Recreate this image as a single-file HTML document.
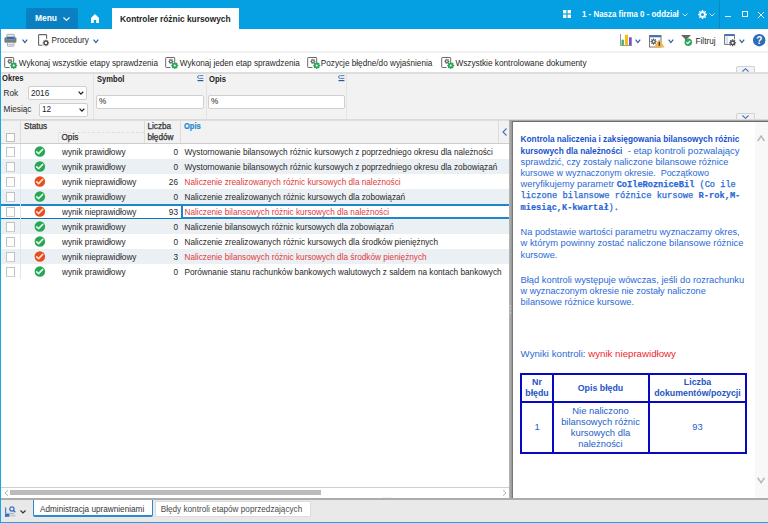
<!DOCTYPE html>
<html><head><meta charset="utf-8">
<style>
*{box-sizing:border-box;margin:0;padding:0}
html,body{width:768px;height:523px;overflow:hidden;background:#fff}
body{position:relative;font-family:"Liberation Sans",sans-serif;font-size:8.2px;color:#282828}
.a{position:absolute}
.t{position:absolute;white-space:nowrap;line-height:1}
svg{position:absolute;overflow:visible}
.row{position:absolute;left:1px;width:508px;height:15px;font-size:8.23px}
.row span{position:absolute;top:5px;line-height:1;white-space:nowrap}
.row .cb{position:absolute;left:5px;top:3px;width:9px;height:10px;border:1px solid #c2c2c2;border-bottom-color:#d0d0d0;background:#fff}
.row .ic{left:34px;top:2px}
.row .c1{left:61px}
.row .c2{left:143px;width:34px;text-align:right}
.row .c3{left:183.5px}
.row:before{content:"";position:absolute;left:19px;top:0;width:1px;height:15px;background:#dbe6f1}
.sel{border-top:2px solid #1c86c9;border-bottom:1px solid #0b72b8}
.sel:before{top:-2px}
.sel span{top:3px} .sel .cb{top:1px} .sel .ic{top:0px}
.bold{font-weight:bold;font-size:8.6px;transform:scaleX(0.885);transform-origin:0 0}
.sel3{position:absolute;left:180px;top:-2px;width:340px;height:15px;border:2px solid #1c86c9}
.inp{position:absolute;background:#fff;border:1px solid #cfcfcf;border-radius:2px}
.chev{stroke:#2b5d9e;stroke-width:1.2;fill:none}
.rl{position:absolute;left:520.6px;white-space:nowrap;font-size:9.2px;line-height:1;color:#2a6ad6}
.rb{font-size:8.25px;color:#1552cf}
.mo{font-family:'Liberation Mono',monospace;font-size:8.65px;-webkit-text-stroke:0.25px #2a6ad6}
.mo b{-webkit-text-stroke:0.15px #1a55cc}
.tc{position:absolute;text-align:center;white-space:nowrap;font-size:9.4px;line-height:1;color:#2262c9}
.b2{font-weight:bold;font-size:8.8px;color:#1d55c4}
</style></head><body>

<!-- TOP BAR -->
<div class="a" style="left:0;top:0;width:768px;height:29px;background:#04a0e1"></div>
<div class="a" style="left:26px;top:8px;width:52px;height:21px;background:#0a80c2;border-radius:2px 2px 0 0"></div>
<div class="t" style="left:34.5px;top:13.4px;font-size:9.8px;font-weight:bold;color:#fff;transform:scaleX(0.86);transform-origin:0 0">Menu</div>
<svg style="left:63px;top:17px" width="7" height="4"><path d="M0.5 0.5 L3.5 3.5 L6.5 0.5" stroke="#fff" stroke-width="1.1" fill="none"/></svg>
<svg style="left:91px;top:14px" width="8" height="9"><path d="M4 0 L8 4 L8 9 L5.2 9 L5.2 6 L2.8 6 L2.8 9 L0 9 L0 4 Z" fill="#fff"/></svg>
<div class="a" style="left:112px;top:8px;width:127px;height:21px;background:#fff"></div>
<div class="t" style="left:120px;top:13.8px;font-size:9.6px;font-weight:bold;color:#1e1e1e;transform:scaleX(0.872);transform-origin:0 0">Kontroler różnic kursowych</div>

<svg style="left:563px;top:10px" width="8" height="8"><rect x="0" y="0" width="3.4" height="3.4" fill="#fff"/><rect x="4.6" y="0" width="3.4" height="3.4" fill="#fff"/><rect x="0" y="4.6" width="3.4" height="3.4" fill="#fff"/><rect x="4.6" y="4.6" width="3.4" height="3.4" fill="#fff"/></svg>
<div class="t" style="left:582px;top:10px;font-size:8.8px;font-weight:bold;color:#fff;transform:scaleX(0.9);transform-origin:0 0">1 - Nasza firma 0 - oddział</div>
<svg style="left:682px;top:13px" width="6" height="4"><path d="M0.5 0.5 L3 3 L5.5 0.5" stroke="#cfeefc" stroke-width="0.9" fill="none"/></svg>
<svg style="left:697.5px;top:10px" width="9" height="9" viewBox="0 0 9 9"><path d="M8.94 3.80 L8.94 5.20 L7.71 5.27 L7.31 6.22 L8.14 7.15 L7.15 8.14 L6.22 7.31 L5.27 7.71 L5.20 8.94 L3.80 8.94 L3.73 7.71 L2.78 7.31 L1.85 8.14 L0.86 7.15 L1.69 6.22 L1.29 5.27 L0.06 5.20 L0.06 3.80 L1.29 3.73 L1.69 2.78 L0.86 1.85 L1.85 0.86 L2.78 1.69 L3.73 1.29 L3.80 0.06 L5.20 0.06 L5.27 1.29 L6.22 1.69 L7.15 0.86 L8.14 1.85 L7.31 2.78 L7.71 3.73Z" fill="#fff"/><circle cx="4.5" cy="4.5" r="1.5" fill="#04a0e1"/></svg>
<svg style="left:709px;top:13px" width="6" height="4"><path d="M0.5 0.5 L3 3 L5.5 0.5" stroke="#cfeefc" stroke-width="0.9" fill="none"/></svg>
<div class="a" style="left:719px;top:0;width:1px;height:29px;background:#0b88c4"></div>
<div class="a" style="left:725px;top:16px;width:6px;height:1px;background:#d8f2fd"></div>
<div class="a" style="left:742px;top:11px;width:6px;height:6px;border:1px solid #e8f7fe"></div>
<svg style="left:758px;top:11.5px" width="6" height="6"><path d="M0 0 L6 6 M6 0 L0 6" stroke="#e8f7fe" stroke-width="1"/></svg>

<!-- left/bottom window border -->
<div class="a" style="left:0;top:29px;width:1px;height:494px;background:#1aa6e4;z-index:5"></div>
<div class="a" style="left:0;top:522px;width:768px;height:1px;background:#1aa6e4;z-index:5"></div>

<!-- TOOLBAR ROW 1 -->
<svg style="left:4px;top:34px" width="13" height="13" viewBox="0 0 13 13">
<rect x="0.4" y="3.2" width="12" height="5.5" rx="1.2" fill="#7d7d7d"/>
<rect x="2.8" y="0.3" width="7.6" height="5" rx="0.8" fill="#e6e6e6" stroke="#9a9a9a" stroke-width="0.8"/>
<rect x="2.8" y="2.7" width="7.6" height="2.5" fill="#2f6cc0"/>
<rect x="3.5" y="8.7" width="6.5" height="3.5" rx="0.6" fill="#fff" stroke="#9a9a9a" stroke-width="0.9"/>
<rect x="4.5" y="10.2" width="4.5" height="0.9" fill="#8fb0e0"/>
</svg>
<svg style="left:22px;top:39px" width="6" height="5"><path class="chev" d="M0.6 0.6 L2.9 3.6 L5.2 0.6"/></svg>
<svg style="left:38px;top:34px" width="12" height="13" viewBox="0 0 12 13"><path d="M4.5 11.2 H1.3 Q0.6 11.2 0.6 10.5 V1.3 Q0.6 0.6 1.3 0.6 H7.9 Q8.6 0.6 8.6 1.3 V4.8" stroke="#666" stroke-width="1.1" fill="none"/><path d="M11.16 8.38 L11.16 9.42 L10.23 9.46 L9.95 10.15 L10.57 10.84 L9.84 11.57 L9.15 10.95 L8.46 11.23 L8.42 12.16 L7.38 12.16 L7.34 11.23 L6.65 10.95 L5.96 11.57 L5.23 10.84 L5.85 10.15 L5.57 9.46 L4.64 9.42 L4.64 8.38 L5.57 8.34 L5.85 7.65 L5.23 6.96 L5.96 6.23 L6.65 6.85 L7.34 6.57 L7.38 5.64 L8.42 5.64 L8.46 6.57 L9.15 6.85 L9.84 6.23 L10.57 6.96 L9.95 7.65 L10.23 8.34Z" fill="#4a4a4a"/><circle cx="7.9" cy="8.9" r="1.2" fill="#fff"/></svg>
<div class="t" style="left:51.5px;top:37.2px;font-size:8.2px;color:#282828">Procedury</div>
<svg style="left:93px;top:39px" width="6" height="5"><path class="chev" d="M0.6 0.6 L2.9 3.6 L5.2 0.6"/></svg>

<div class="a" style="left:1px;top:51px;width:767px;height:2px;background:#f1f1f1"></div>

<!-- right toolbar -->
<svg style="left:620px;top:34px" width="12" height="12" viewBox="0 0 12 12"><path d="M0.5 0 V11.5 H12" stroke="#999" stroke-width="1" fill="none"/><rect x="1.5" y="5.7" width="2.4" height="5.6" fill="#3fb36b"/><rect x="5" y="0.7" width="3" height="10.6" fill="#f7bd10"/><rect x="9" y="3.3" width="2.7" height="8" fill="#7a4cc2"/></svg>
<svg style="left:635px;top:39px" width="6" height="5"><path class="chev" d="M0.6 0.6 L2.9 3.6 L5.2 0.6"/></svg>
<svg style="left:649px;top:34.5px" width="16" height="13" viewBox="0 0 16 13"><rect x="0.5" y="0.5" width="11.5" height="11.5" fill="#fff" stroke="#777" stroke-width="1"/><rect x="0.5" y="0.5" width="11.5" height="1.8" fill="#3a74c4"/><path d="M7.66 6.12 L7.66 7.08 L6.74 7.11 L6.48 7.75 L7.11 8.42 L6.42 9.11 L5.75 8.48 L5.11 8.74 L5.08 9.66 L4.12 9.66 L4.09 8.74 L3.45 8.48 L2.78 9.11 L2.09 8.42 L2.72 7.75 L2.46 7.11 L1.54 7.08 L1.54 6.12 L2.46 6.09 L2.72 5.45 L2.09 4.78 L2.78 4.09 L3.45 4.72 L4.09 4.46 L4.12 3.54 L5.08 3.54 L5.11 4.46 L5.75 4.72 L6.42 4.09 L7.11 4.78 L6.48 5.45 L6.74 6.09Z" fill="#555"/><circle cx="4.6" cy="6.6" r="1" fill="#fff"/><path d="M10.2 4.2 L15.6 12.5 H4.8 Z" fill="#f1b34f"/><rect x="9.7" y="6.8" width="1.1" height="4" fill="#222"/></svg>
<svg style="left:668px;top:39px" width="6" height="5"><path class="chev" d="M0.6 0.6 L2.9 3.6 L5.2 0.6"/></svg>
<svg style="left:681px;top:35px" width="12" height="11" viewBox="0 0 12 11"><path d="M0 0 H10 L6 4 V6 L4 6 V4 Z" fill="#666"/><circle cx="7.3" cy="7.2" r="3.7" fill="#2aa65a"/><path d="M5.4 7.2 L6.8 8.5 L9.2 6" stroke="#fff" stroke-width="1.2" fill="none"/></svg>
<div class="t" style="left:695.5px;top:38px;font-size:8.2px;color:#282828">Filtruj</div>
<svg style="left:724px;top:34px" width="13" height="13" viewBox="0 0 13 13"><path d="M6 10.5 H0.5 V0.5 H10.5 V5.5" fill="#fff" stroke="#7a7a7a" stroke-width="1"/><rect x="0.5" y="0.5" width="10" height="1.6" fill="#3a74c4"/><rect x="1.5" y="2.6" width="2.6" height="7.4" fill="#cfe3f6"/><rect x="4.1" y="2.6" width="5.9" height="7.4" fill="#fff"/><path d="M12.16 8.24 L12.16 9.36 L11.13 9.41 L10.82 10.16 L11.51 10.92 L10.72 11.71 L9.96 11.02 L9.21 11.33 L9.16 12.36 L8.04 12.36 L7.99 11.33 L7.24 11.02 L6.48 11.71 L5.69 10.92 L6.38 10.16 L6.07 9.41 L5.04 9.36 L5.04 8.24 L6.07 8.19 L6.38 7.44 L5.69 6.68 L6.48 5.89 L7.24 6.58 L7.99 6.27 L8.04 5.24 L9.16 5.24 L9.21 6.27 L9.96 6.58 L10.72 5.89 L11.51 6.68 L10.82 7.44 L11.13 8.19Z" fill="#505050"/><circle cx="8.6" cy="8.8" r="1.1" fill="#fff"/></svg>
<svg style="left:739px;top:39px" width="6" height="5"><path class="chev" d="M0.6 0.6 L2.9 3.6 L5.2 0.6"/></svg>
<svg style="left:753px;top:34px" width="13" height="13" viewBox="0 0 13 13"><circle cx="6.2" cy="6.2" r="6.2" fill="#2d6db5"/><text x="6.2" y="10" text-anchor="middle" font-family="Liberation Sans" font-weight="bold" font-size="10" fill="#fff">?</text></svg>

<!-- TOOLBAR ROW 2 -->
<svg style="left:4px;top:56.6px" width="14" height="13" viewBox="0 0 14 13">
<path d="M5.5 10.5 H1.3 Q0.7 10.5 0.7 9.9 V1.1 Q0.7 0.5 1.3 0.5 H9.1 Q9.7 0.5 9.7 1.1 V5" stroke="#6a6a6a" stroke-width="1" fill="#fff"/>
<path d="M8.57 3.98 L8.57 4.82 L7.75 4.84 L7.52 5.39 L8.08 5.99 L7.49 6.58 L6.89 6.02 L6.34 6.25 L6.32 7.07 L5.48 7.07 L5.46 6.25 L4.91 6.02 L4.31 6.58 L3.72 5.99 L4.28 5.39 L4.05 4.84 L3.23 4.82 L3.23 3.98 L4.05 3.96 L4.28 3.41 L3.72 2.81 L4.31 2.22 L4.91 2.78 L5.46 2.55 L5.48 1.73 L6.32 1.73 L6.34 2.55 L6.89 2.78 L7.49 2.22 L8.08 2.81 L7.52 3.41 L7.75 3.96Z" fill="#666"/><circle cx="5.9" cy="4.4" r="0.8" fill="#fff"/>
<path d="M13.26 7.94 L13.26 9.06 L12.52 9.18 L12.17 10.02 L12.61 10.62 L11.82 11.41 L11.22 10.97 L10.38 11.32 L10.26 12.06 L9.14 12.06 L9.02 11.32 L8.18 10.97 L7.58 11.41 L6.79 10.62 L7.23 10.02 L6.88 9.18 L6.14 9.06 L6.14 7.94 L6.88 7.82 L7.23 6.98 L6.79 6.38 L7.58 5.59 L8.18 6.03 L9.02 5.68 L9.14 4.94 L10.26 4.94 L10.38 5.68 L11.22 6.03 L11.82 5.59 L12.61 6.38 L12.17 6.98 L12.52 7.82Z" fill="#2aa65a"/><circle cx="9.7" cy="8.5" r="1.0" fill="#fff"/>
</svg>
<div class="t" style="left:18.8px;top:60px;font-size:8.2px;color:#282828">Wykonaj wszystkie etapy sprawdzenia</div>
<svg style="left:164.8px;top:56.6px" width="14" height="13" viewBox="0 0 14 13">
<path d="M5.5 10.5 H1.3 Q0.7 10.5 0.7 9.9 V1.1 Q0.7 0.5 1.3 0.5 H9.1 Q9.7 0.5 9.7 1.1 V5" stroke="#6a6a6a" stroke-width="1" fill="#fff"/>
<path d="M8.57 3.98 L8.57 4.82 L7.75 4.84 L7.52 5.39 L8.08 5.99 L7.49 6.58 L6.89 6.02 L6.34 6.25 L6.32 7.07 L5.48 7.07 L5.46 6.25 L4.91 6.02 L4.31 6.58 L3.72 5.99 L4.28 5.39 L4.05 4.84 L3.23 4.82 L3.23 3.98 L4.05 3.96 L4.28 3.41 L3.72 2.81 L4.31 2.22 L4.91 2.78 L5.46 2.55 L5.48 1.73 L6.32 1.73 L6.34 2.55 L6.89 2.78 L7.49 2.22 L8.08 2.81 L7.52 3.41 L7.75 3.96Z" fill="#666"/><circle cx="5.9" cy="4.4" r="0.8" fill="#fff"/>
<path d="M13.26 7.94 L13.26 9.06 L12.52 9.18 L12.17 10.02 L12.61 10.62 L11.82 11.41 L11.22 10.97 L10.38 11.32 L10.26 12.06 L9.14 12.06 L9.02 11.32 L8.18 10.97 L7.58 11.41 L6.79 10.62 L7.23 10.02 L6.88 9.18 L6.14 9.06 L6.14 7.94 L6.88 7.82 L7.23 6.98 L6.79 6.38 L7.58 5.59 L8.18 6.03 L9.02 5.68 L9.14 4.94 L10.26 4.94 L10.38 5.68 L11.22 6.03 L11.82 5.59 L12.61 6.38 L12.17 6.98 L12.52 7.82Z" fill="#2aa65a"/><circle cx="9.7" cy="8.5" r="1.0" fill="#fff"/>
</svg>
<div class="t" style="left:179.8px;top:60px;font-size:8.2px;color:#282828">Wykonaj jeden etap sprawdzenia</div>
<svg style="left:306.7px;top:56.6px" width="14" height="13" viewBox="0 0 14 13">
<path d="M5.5 10.5 H1.3 Q0.7 10.5 0.7 9.9 V1.1 Q0.7 0.5 1.3 0.5 H9.1 Q9.7 0.5 9.7 1.1 V5" stroke="#6a6a6a" stroke-width="1" fill="#fff"/>
<path d="M8.57 3.98 L8.57 4.82 L7.75 4.84 L7.52 5.39 L8.08 5.99 L7.49 6.58 L6.89 6.02 L6.34 6.25 L6.32 7.07 L5.48 7.07 L5.46 6.25 L4.91 6.02 L4.31 6.58 L3.72 5.99 L4.28 5.39 L4.05 4.84 L3.23 4.82 L3.23 3.98 L4.05 3.96 L4.28 3.41 L3.72 2.81 L4.31 2.22 L4.91 2.78 L5.46 2.55 L5.48 1.73 L6.32 1.73 L6.34 2.55 L6.89 2.78 L7.49 2.22 L8.08 2.81 L7.52 3.41 L7.75 3.96Z" fill="#666"/><circle cx="5.9" cy="4.4" r="0.8" fill="#fff"/>
<path d="M13.26 7.94 L13.26 9.06 L12.52 9.18 L12.17 10.02 L12.61 10.62 L11.82 11.41 L11.22 10.97 L10.38 11.32 L10.26 12.06 L9.14 12.06 L9.02 11.32 L8.18 10.97 L7.58 11.41 L6.79 10.62 L7.23 10.02 L6.88 9.18 L6.14 9.06 L6.14 7.94 L6.88 7.82 L7.23 6.98 L6.79 6.38 L7.58 5.59 L8.18 6.03 L9.02 5.68 L9.14 4.94 L10.26 4.94 L10.38 5.68 L11.22 6.03 L11.82 5.59 L12.61 6.38 L12.17 6.98 L12.52 7.82Z" fill="#2aa65a"/><circle cx="9.7" cy="8.5" r="1.0" fill="#fff"/>
</svg>
<div class="t" style="left:320.8px;top:60px;font-size:8.2px;color:#282828">Pozycje błędne/do wyjaśnienia</div>

<svg style="left:440.6px;top:56.6px" width="14" height="13" viewBox="0 0 14 13">
<path d="M5.5 10.5 H1.3 Q0.7 10.5 0.7 9.9 V1.1 Q0.7 0.5 1.3 0.5 H9.1 Q9.7 0.5 9.7 1.1 V5" stroke="#6a6a6a" stroke-width="1" fill="#fff"/>
<path d="M8.57 3.98 L8.57 4.82 L7.75 4.84 L7.52 5.39 L8.08 5.99 L7.49 6.58 L6.89 6.02 L6.34 6.25 L6.32 7.07 L5.48 7.07 L5.46 6.25 L4.91 6.02 L4.31 6.58 L3.72 5.99 L4.28 5.39 L4.05 4.84 L3.23 4.82 L3.23 3.98 L4.05 3.96 L4.28 3.41 L3.72 2.81 L4.31 2.22 L4.91 2.78 L5.46 2.55 L5.48 1.73 L6.32 1.73 L6.34 2.55 L6.89 2.78 L7.49 2.22 L8.08 2.81 L7.52 3.41 L7.75 3.96Z" fill="#666"/><circle cx="5.9" cy="4.4" r="0.8" fill="#fff"/>
<path d="M13.26 7.94 L13.26 9.06 L12.52 9.18 L12.17 10.02 L12.61 10.62 L11.82 11.41 L11.22 10.97 L10.38 11.32 L10.26 12.06 L9.14 12.06 L9.02 11.32 L8.18 10.97 L7.58 11.41 L6.79 10.62 L7.23 10.02 L6.88 9.18 L6.14 9.06 L6.14 7.94 L6.88 7.82 L7.23 6.98 L6.79 6.38 L7.58 5.59 L8.18 6.03 L9.02 5.68 L9.14 4.94 L10.26 4.94 L10.38 5.68 L11.22 6.03 L11.82 5.59 L12.61 6.38 L12.17 6.98 L12.52 7.82Z" fill="#2aa65a"/><circle cx="9.7" cy="8.5" r="1.0" fill="#fff"/>
</svg>
<div class="t" style="left:455.4px;top:60px;font-size:8.25px;color:#282828">Wszystkie kontrolowane dokumenty</div>

<!-- FILTER PANEL -->
<div class="a" style="left:1px;top:72px;width:767px;height:48px;background:#f2f2f2;border-top:2px solid #dedede;border-bottom:1px solid #dadada"></div>
<div class="a" style="left:736px;top:66px;width:19px;height:6px;background:#f3f3f3;border:1px solid #d2d2d2;border-bottom:none;border-radius:2px 2px 0 0"></div>
<svg style="left:741.5px;top:67.5px" width="7" height="4"><path d="M0.5 3.5 L3.5 0.7 L6.5 3.5" stroke="#3e74b8" stroke-width="1.1" fill="none"/></svg>
<div class="a" style="left:736px;top:113px;width:19px;height:6px;background:#f3f3f3;border:1px solid #d2d2d2;border-bottom:none;border-radius:2px 2px 0 0"></div>
<svg style="left:741.5px;top:115px" width="7" height="4"><path d="M0.5 0.5 L3.5 3.3 L6.5 0.5" stroke="#3e74b8" stroke-width="1.1" fill="none"/></svg>

<div class="t bold" style="left:1.6px;top:73.6px;color:#222">Okres</div>
<div class="t" style="left:3.6px;top:89.5px">Rok</div>
<div class="inp" style="left:28px;top:86px;width:59px;height:14px"></div>
<div class="t" style="left:31px;top:89.5px;color:#222">2016</div>
<svg style="left:78px;top:91px" width="6" height="4"><path d="M0.6 0.7 L2.9 3.2 L5.3 0.7" stroke="#222" stroke-width="1.25" fill="none"/></svg>
<div class="t" style="left:3.6px;top:105.5px">Miesiąc</div>
<div class="inp" style="left:39px;top:103px;width:48.5px;height:13.5px"></div>
<div class="t" style="left:42px;top:106px;color:#222">12</div>
<svg style="left:79px;top:107.5px" width="6" height="4"><path d="M0.6 0.7 L2.9 3.2 L5.3 0.7" stroke="#222" stroke-width="1.25" fill="none"/></svg>
<div class="a" style="left:93px;top:74px;width:1px;height:45px;background:#e3e3e3"></div>

<div class="t bold" style="left:96.5px;top:75.3px;color:#222">Symbol</div>
<svg style="left:197px;top:75px" width="7" height="7"><path d="M6.4 0.6 H2.4 Q0.5 0.6 0.5 2.05 Q0.5 3.4 2.4 3.4 H6.4" stroke="#4f84c4" stroke-width="1" fill="none"/><path d="M0.5 5.6 H6.4" stroke="#2b5c98" stroke-width="1.2"/></svg>
<div class="a" style="left:206px;top:74px;width:1px;height:45px;background:#e3e3e3"></div>
<div class="inp" style="left:96px;top:94.5px;width:108px;height:14px"></div>
<div class="t" style="left:99px;top:98px;color:#222">%</div>

<div class="t bold" style="left:208.7px;top:75.3px;color:#222">Opis</div>
<svg style="left:337.5px;top:75px" width="7" height="7"><path d="M6.4 0.6 H2.4 Q0.5 0.6 0.5 2.05 Q0.5 3.4 2.4 3.4 H6.4" stroke="#4f84c4" stroke-width="1" fill="none"/><path d="M0.5 5.6 H6.4" stroke="#2b5c98" stroke-width="1.2"/></svg>
<div class="a" style="left:346px;top:74px;width:1px;height:45px;background:#e6e6e6"></div>
<div class="inp" style="left:208px;top:94.5px;width:137px;height:14px"></div>
<div class="t" style="left:211px;top:98px;color:#222">%</div>

<!-- GRID -->
<div class="a" style="left:1px;top:120px;width:508px;height:24px;background:#f2f2f2;border-top:1px solid #dedede;border-bottom:1px solid #cdcdcd"></div>
<div class="a" style="left:20px;top:120px;width:1px;height:23px;background:#dcdcdc"></div>
<div class="a" style="left:144px;top:120px;width:1px;height:23px;background:#dcdcdc"></div>
<div class="a" style="left:180px;top:120px;width:1px;height:23px;background:#dcdcdc"></div>
<div class="a" style="left:498px;top:120px;width:1px;height:23px;background:#dcdcdc"></div>
<div class="a" style="left:58px;top:132px;width:86px;height:0;border-top:1px dashed #dedede"></div>
<div class="a" style="left:58px;top:132px;width:1px;height:11px;background:#e6e6e6"></div>
<div class="t" style="left:24px;top:122.8px;color:#333;-webkit-text-stroke:0.25px #333">Status</div>
<div class="t" style="left:61.5px;top:134.3px;color:#333;-webkit-text-stroke:0.25px #333">Opis</div>
<div class="t" style="left:147.5px;top:122.8px;color:#333;-webkit-text-stroke:0.25px #333">Liczba</div>
<div class="t" style="left:147.5px;top:134.3px;color:#333;-webkit-text-stroke:0.25px #333">błędów</div>
<div class="t bold" style="left:184.3px;top:121.6px;color:#1f86d0;transform:scaleX(0.87);-webkit-text-stroke:0.2px #1f86d0">Opis</div>
<i class="a" style="left:6px;top:133px;width:9px;height:9px;border:1px solid #bdbdbd;background:#fff"></i>
<svg style="left:501.5px;top:128px" width="5" height="8"><path d="M4.5 0.5 L1 4 L4.5 7.5" stroke="#3e74b8" stroke-width="1.1" fill="none"/></svg>

<div class="row" style="top:144px;background:#fff"><i class="cb"></i><svg class="ic" width="11" height="11" viewBox="0 0 11 11"><circle cx="4.85" cy="5.55" r="5.25" fill="#25a854"/><path d="M1.7 5.8 L3.6 7.6 L7.7 3.4" stroke="#e6f5ea" stroke-width="1.6" fill="none" stroke-linecap="round" stroke-linejoin="round"/></svg><span class="c1">wynik prawidłowy</span><span class="c2">0</span><span class="c3" style="color:#282828">Wystornowanie bilansowych różnic kursowych z poprzedniego okresu dla należności</span></div>
<div class="row" style="top:159px;background:#ebf0f4"><i class="cb"></i><svg class="ic" width="11" height="11" viewBox="0 0 11 11"><circle cx="4.85" cy="5.55" r="5.25" fill="#25a854"/><path d="M1.7 5.8 L3.6 7.6 L7.7 3.4" stroke="#e6f5ea" stroke-width="1.6" fill="none" stroke-linecap="round" stroke-linejoin="round"/></svg><span class="c1">wynik prawidłowy</span><span class="c2">0</span><span class="c3" style="color:#282828">Wystornowanie bilansowych różnic kursowych z poprzedniego okresu dla zobowiązań</span></div>
<div class="row" style="top:174px;background:#fff"><i class="cb"></i><svg class="ic" width="11" height="11" viewBox="0 0 11 11"><circle cx="4.85" cy="5.55" r="5.25" fill="#e84c18"/><path d="M1.7 5.8 L3.6 7.6 L7.7 3.4" stroke="#fde3d6" stroke-width="1.6" fill="none" stroke-linecap="round" stroke-linejoin="round"/></svg><span class="c1">wynik nieprawidłowy</span><span class="c2">26</span><span class="c3" style="color:#e23a3c">Naliczenie zrealizowanych różnic kursowych dla należności</span></div>
<div class="row" style="top:189px;background:#ebf0f4"><i class="cb"></i><svg class="ic" width="11" height="11" viewBox="0 0 11 11"><circle cx="4.85" cy="5.55" r="5.25" fill="#25a854"/><path d="M1.7 5.8 L3.6 7.6 L7.7 3.4" stroke="#e6f5ea" stroke-width="1.6" fill="none" stroke-linecap="round" stroke-linejoin="round"/></svg><span class="c1">wynik prawidłowy</span><span class="c2">0</span><span class="c3" style="color:#282828">Naliczenie zrealizowanych różnic kursowych dla zobowiązań</span></div>
<div class="row sel" style="top:204px;background:#fff"><i class="cb"></i><svg class="ic" width="11" height="11" viewBox="0 0 11 11"><circle cx="4.85" cy="5.55" r="5.25" fill="#e84c18"/><path d="M1.7 5.8 L3.6 7.6 L7.7 3.4" stroke="#fde3d6" stroke-width="1.6" fill="none" stroke-linecap="round" stroke-linejoin="round"/></svg><span class="c1">wynik nieprawidłowy</span><span class="c2">93</span><span class="c3" style="color:#e23a3c">Naliczenie bilansowych różnic kursowych dla należności</span></div>
<div class="row" style="top:219px;background:#ebf0f4"><i class="cb"></i><svg class="ic" width="11" height="11" viewBox="0 0 11 11"><circle cx="4.85" cy="5.55" r="5.25" fill="#25a854"/><path d="M1.7 5.8 L3.6 7.6 L7.7 3.4" stroke="#e6f5ea" stroke-width="1.6" fill="none" stroke-linecap="round" stroke-linejoin="round"/></svg><span class="c1">wynik prawidłowy</span><span class="c2">0</span><span class="c3" style="color:#282828">Naliczenie bilansowych różnic kursowych dla zobowiązań</span></div>
<div class="row" style="top:234px;background:#fff"><i class="cb"></i><svg class="ic" width="11" height="11" viewBox="0 0 11 11"><circle cx="4.85" cy="5.55" r="5.25" fill="#25a854"/><path d="M1.7 5.8 L3.6 7.6 L7.7 3.4" stroke="#e6f5ea" stroke-width="1.6" fill="none" stroke-linecap="round" stroke-linejoin="round"/></svg><span class="c1">wynik prawidłowy</span><span class="c2">0</span><span class="c3" style="color:#282828">Naliczenie zrealizowanych różnic kursowych dla środków pieniężnych</span></div>
<div class="row" style="top:249px;background:#ebf0f4"><i class="cb"></i><svg class="ic" width="11" height="11" viewBox="0 0 11 11"><circle cx="4.85" cy="5.55" r="5.25" fill="#e84c18"/><path d="M1.7 5.8 L3.6 7.6 L7.7 3.4" stroke="#fde3d6" stroke-width="1.6" fill="none" stroke-linecap="round" stroke-linejoin="round"/></svg><span class="c1">wynik nieprawidłowy</span><span class="c2">3</span><span class="c3" style="color:#e23a3c">Naliczenie bilansowych różnic kursowych dla środków pieniężnych</span></div>
<div class="row" style="top:264px;background:#fff"><i class="cb"></i><svg class="ic" width="11" height="11" viewBox="0 0 11 11"><circle cx="4.85" cy="5.55" r="5.25" fill="#25a854"/><path d="M1.7 5.8 L3.6 7.6 L7.7 3.4" stroke="#e6f5ea" stroke-width="1.6" fill="none" stroke-linecap="round" stroke-linejoin="round"/></svg><span class="c1">wynik prawidłowy</span><span class="c2">0</span><span class="c3" style="color:#282828">Porównanie stanu rachunków bankowych walutowych z saldem na kontach bankowych</span></div>
<div class="a" style="left:181px;top:204px;width:330px;height:15px;border:2px solid #1c86c9"></div>

<div class="a" style="left:1px;top:487px;width:508px;height:1px;background:#cecece"></div>
<svg style="left:3.5px;top:490px" width="5" height="6"><path d="M4 0.3 L1 3 L4 5.7" stroke="#aaa" stroke-width="0.9" fill="none"/></svg>
<div class="a" style="left:10px;top:490px;width:311px;height:5px;background:#bbbbbb"></div>
<svg style="left:502px;top:490px" width="5" height="6"><path d="M1 0.3 L4 3 L1 5.7" stroke="#aaa" stroke-width="0.9" fill="none"/></svg>

<!-- splitter + right panel -->
<div class="a" style="left:509px;top:120px;width:3px;height:379px;background:linear-gradient(to right,#b9b9b9,#a6a6a6,#969696)"></div>
<div class="a" style="left:509.5px;top:304.5px;width:1.5px;height:2px;background:#c6c6c6"></div><div class="a" style="left:509.5px;top:308px;width:1.5px;height:2px;background:#c6c6c6"></div><div class="a" style="left:509.5px;top:311.5px;width:1.5px;height:2px;background:#c6c6c6"></div>
<div class="a" style="left:509px;top:120px;width:259px;height:1px;background:#a9a9a9"></div>
<div class="a" style="left:512px;top:121px;width:256px;height:1px;background:#6d6d6d"></div>
<div class="a" style="left:512px;top:121px;width:1px;height:378px;background:#767676"></div>
<div class="a" style="left:755px;top:122px;width:13px;height:376px;background:#f8f8f8"></div>
<svg style="left:756.8px;top:134.5px" width="9" height="7"><path d="M0.7 6 L4.1 1 L7.5 6" stroke="#b8b8b8" stroke-width="1.5" fill="none"/></svg>
<svg style="left:756.8px;top:476.6px" width="9" height="7"><path d="M0.7 0.8 L4.1 5.6 L7.5 0.8" stroke="#b8b8b8" stroke-width="1.5" fill="none"/></svg>


<div class="rl" style="top:135.4px"><b class="rb">Kontrola naliczenia i zaksięgowania bilansowych różnic</b></div>
<div class="rl" style="top:147.4px"><b class="rb">kursowych dla należności</b><span style="font-size:9.5px;line-height:0"> &nbsp;- etap kontroli pozwalający</span></div>
<div class="rl" style="top:157.8px">sprawdzić, czy zostały naliczone bilansowe różnice</div>
<div class="rl" style="top:169.0px;font-size:8.97px">kursowe w wyznaczonym okresie.&nbsp; Początkowo</div>
<div class="rl" style="top:180.1px"><span style="font-size:9.3px;line-height:0">weryfikujemy parametr </span><b class="mo">CoIleRozniceBil</b><span class="mo"> (Co ile</span></div>
<div class="rl" style="top:191.3px"><span class="mo" style="font-size:8.72px">liczone bilansowe różnice kursowe <b>R-rok,M-</b></span></div>
<div class="rl" style="top:202.5px"><span class="mo"><b>miesiąc,K-kwartał</b>).</span></div>
<div class="rl" style="top:228.1px">Na podstawie wartości parametru wyznaczamy okres,</div>
<div class="rl" style="top:239.3px;font-size:9.35px">w którym powinny zostać naliczone bilansowe różnice</div>
<div class="rl" style="top:250.5px">kursowe.</div>
<div class="rl" style="top:275.9px;font-size:9.32px">Błąd kontroli występuje wówczas, jeśli do rozrachunku</div>
<div class="rl" style="top:287.1px;font-size:9.13px">w wyznaczonym okresie nie zostały naliczone</div>
<div class="rl" style="top:298.1px;font-size:9.29px">bilansowe różnice kursowe.</div>
<div class="rl" style="top:349.0px;font-size:9.69px">Wyniki kontroli: <span style="color:#f0262a">wynik nieprawidłowy</span></div>
<div class="a" style="left:520px;top:373px;width:227px;height:81px;border:2px solid #0808c0"></div>
<div class="a" style="left:520px;top:400.5px;width:227px;height:2px;background:#0808c0"></div>
<div class="a" style="left:551.5px;top:373px;width:2px;height:81px;background:#0808c0"></div>
<div class="a" style="left:647.5px;top:373px;width:2px;height:81px;background:#0808c0"></div>
<div class="tc b2" style="left:522px;width:30px;top:377.75px">Nr</div>
<div class="tc b2" style="left:522px;width:30px;top:388.65px">błędu</div>
<div class="tc b2" style="left:553px;width:95px;top:384.4px">Opis błędu</div>
<div class="tc b2" style="left:649px;width:97px;top:377.75px">Liczba</div>
<div class="tc b2" style="left:649px;width:97px;top:388.65px">dokumentów/pozycji</div>
<div class="tc" style="left:522px;width:30px;top:422.4px">1</div>
<div class="tc" style="left:553px;width:95px;top:405.7px">Nie naliczono</div>
<div class="tc" style="left:553px;width:95px;top:416.6px">bilansowych różnic</div>
<div class="tc" style="left:553px;width:95px;top:427.7px">kursowych dla</div>
<div class="tc" style="left:553px;width:95px;top:438.6px">należności</div>
<div class="tc" style="left:649px;width:97px;top:422.4px">93</div>


<!-- BOTTOM BAR -->
<div class="a" style="left:1px;top:498px;width:767px;height:24px;background:#e9e9e9;border-top:2px solid #acacac"></div>
<svg style="left:5px;top:505px" width="12" height="13" viewBox="0 0 12 13"><rect x="0.1" y="2.5" width="1.1" height="9.3" fill="#3a6fc0"/><rect x="0.1" y="7.9" width="8.8" height="0.8" fill="#7fa3d8"/><rect x="0.1" y="9" width="4.4" height="2.8" fill="#3a6fc0"/><rect x="5.5" y="9.6" width="5" height="1.8" fill="#c4c4c4"/><circle cx="6.9" cy="3.9" r="2.1" stroke="#3a6fc0" stroke-width="1.25" fill="none"/><path d="M8.4 5.4 L10.3 7.3" stroke="#3a6fc0" stroke-width="1.4"/></svg>
<svg style="left:20px;top:510px" width="6" height="4"><path d="M0.5 0.5 L3 3 L5.5 0.5" stroke="#333" stroke-width="1.2" fill="none"/></svg>
<div class="a" style="left:33px;top:500px;width:120px;height:17px;background:#fff;border-left:1px solid #2b8ad0;border-bottom:2px solid #2b8ad0;border-right:1px solid #2b8ad0;border-radius:0 0 2px 2px"></div>
<div class="t" style="left:40px;top:506px;color:#333">Administracja uprawnieniami</div>
<div class="a" style="left:155px;top:501px;width:156px;height:15.5px;background:#fff;border:1px solid #dcdcdc"></div>
<div class="a" style="left:383px;top:497px;width:8px;height:1px;border-top:1px dotted #e8e8e8"></div>
<div class="t" style="left:160.7px;top:506px;color:#4a4a4a">Błędy kontroli etapów poprzedzających</div>

</body></html>
